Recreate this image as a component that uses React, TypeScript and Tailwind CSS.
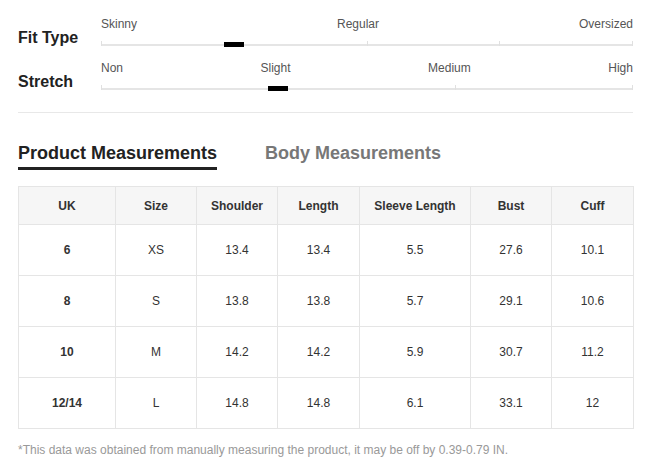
const rows = [
  ["6", "XS", "13.4", "13.4", "5.5", "27.6", "10.1"],
  ["8", "S", "13.8", "13.8", "5.7", "29.1", "10.6"],
  ["10", "M", "14.2", "14.2", "5.9", "30.7", "11.2"],
  ["12/14", "L", "14.8", "14.8", "6.1", "33.1", "12"],
];
const heads = ["UK", "Size", "Shoulder", "Length", "Sleeve Length", "Bust", "Cuff"];
const widths = ["w-[97px]", "w-[81px]", "w-[81px]", "w-[82px]", "w-[111px]", "w-[81px]", "w-[82px]"];

function Scale({ title, labels, ticks, marker }: { title: string; labels: string[]; ticks: number[]; marker: number }) {
  return (
    <div className="flex items-end">
      <div className="w-[83px] text-[16px] font-bold text-[#222] leading-none">{title}</div>
      <div className="flex-1">
        <div className="flex justify-between text-[12px] text-[#555] leading-none">
          {labels.map((l) => (
            <span key={l}>{l}</span>
          ))}
        </div>
        <div className="relative mt-[8px] h-[8px]">
          <div className="absolute left-0 right-0 bottom-0 h-[2px] bg-[#e5e5e5]" />
          {ticks.map((t) => (
            <div key={t} className="absolute bottom-0 w-[1px] h-[5px] bg-[#e0e0e0]" style={{ left: t }} />
          ))}
          <div className="absolute right-0 bottom-0 w-[1px] h-[5px] bg-[#e0e0e0]" />
          <div className="absolute bottom-[-1px] w-[20px] h-[5px] bg-black" style={{ left: marker }} />
        </div>
      </div>
    </div>
  );
}

export default function App() {
  return (
    <div className="w-[661px] h-[472px] bg-white px-[18px] pt-[18px] font-[Liberation_Sans,Arial,sans-serif]">
      <div className="pr-[10px] flex flex-col gap-[16px]">
        <Scale title="Fit Type" labels={["Skinny", "Regular", "Oversized"]} ticks={[0, 266, 398]} marker={123} />
        <Scale title="Stretch" labels={["Non", "Slight", "Medium", "High"]} ticks={[0, 354]} marker={167} />
      </div>
      <div className="mt-[22px] mr-[10px] h-[1px] bg-[#e8e8e8]" />
      <div className="mt-[31px] flex gap-[48px] text-[18px] font-bold leading-none">
        <div className="text-[#222] pb-[5px] border-b-[3px] border-[#222]">Product Measurements</div>
        <div className="text-[#777]">Body Measurements</div>
      </div>
      <table className="mt-[16px] w-[615px] border-collapse text-[12px] text-[#333] text-center table-fixed">
        <thead>
          <tr className="bg-[#f6f6f6] h-[38px]">
            {heads.map((h, i) => (
              <th key={h} className={`${widths[i]} border border-[#e5e5e5] font-bold`}>{h}</th>
            ))}
          </tr>
        </thead>
        <tbody>
          {rows.map((r) => (
            <tr key={r[0]} className="h-[51px]">
              {r.map((c, i) => (
                <td key={i} className={`border border-[#e5e5e5] ${i === 0 ? "font-bold" : ""}`}>{c}</td>
              ))}
            </tr>
          ))}
        </tbody>
      </table>
      <p className="mt-[12px] text-[12px] text-[#999]">*This data was obtained from manually measuring the product, it may be off by 0.39-0.79 IN.</p>
    </div>
  );
}
